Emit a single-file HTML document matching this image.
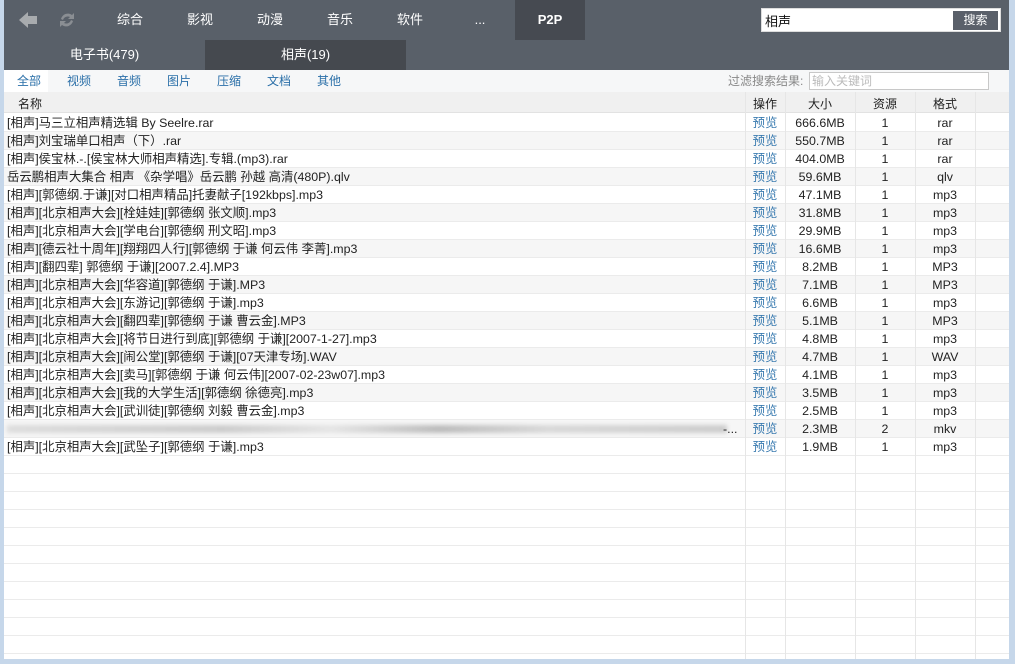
<!DOCTYPE html>
<html><head><meta charset="utf-8"><style>
*{margin:0;padding:0;box-sizing:border-box}
body{width:1015px;height:664px;background:#c6d7ea;position:relative;overflow:hidden;font-family:"Liberation Sans","Noto Sans CJK SC",sans-serif;font-size:12px;color:#222}
.win{position:absolute;left:4px;top:0;width:1005px;height:659px;background:#fff;overflow:hidden}
.top{position:absolute;left:0;top:0;width:1005px;height:70px;background:#596069}
.nav{position:absolute;top:0;height:40px;line-height:40px;color:#fff;font-size:13px;text-align:center}
.p2p{background:#464a51;font-weight:bold}
.sub{position:absolute;top:40px;height:30px;line-height:30px;color:#fff;font-size:13px;text-align:center;width:201px}
.search{position:absolute;left:757px;top:8px;width:240px;height:24px;background:#fff;border:1px solid #ddd}
.search span{position:absolute;left:3px;top:2px;font-size:13px;color:#111}
.search b{position:absolute;right:2px;top:2px;width:45px;height:19px;background:#5a606a;color:#fff;font-weight:normal;font-size:12px;text-align:center;line-height:19px}
.filter{position:absolute;left:0;top:70px;width:1005px;height:22px;background:#f6f7f8}
.filter a{position:absolute;top:0;line-height:22px;color:#2a6fa8;font-size:12px}
.hdr{position:absolute;left:0;top:92px;width:1005px;height:21px;background:#f0f0f0;border-bottom:1px solid #e2e2e2}
.row{position:absolute;left:0;width:1005px;height:18px;line-height:18px;border-bottom:1px solid #ebebeb;font-size:12.4px}
.row.s{background:#f6f6f6}
.c{position:absolute;top:0;text-align:center}
.vl{position:absolute;top:92px;bottom:0;width:1px;background:#e6e6e6}
</style></head><body>
<div class="win">
<div class="top">
<svg style="position:absolute;left:13px;top:10px" width="22" height="20"><path d="M2 10 L11 2 L11 6 L20 6 L20 14 L11 14 L11 18 Z" fill="#a8abae"/></svg>
<svg style="position:absolute;left:52px;top:10px" width="22" height="20"><path d="M5 9 A7 7 0 0 1 16 5 L18 3 L18 9 L12 9 L14 7 A5 5 0 0 0 7 10 Z M17 11 A7 7 0 0 1 6 15 L4 17 L4 11 L10 11 L8 13 A5 5 0 0 0 15 10 Z" fill="#8a8e93"/></svg>
<div class="nav" style="left:101px;width:50px">综合</div>
<div class="nav" style="left:171px;width:50px">影视</div>
<div class="nav" style="left:241px;width:50px">动漫</div>
<div class="nav" style="left:311px;width:50px">音乐</div>
<div class="nav" style="left:381px;width:50px">软件</div>
<div class="nav" style="left:451px;width:50px">...</div>
<div class="nav p2p" style="left:511px;width:70px">P2P</div>
<div class="sub" style="left:0">电子书(479)</div>
<div class="sub" style="left:201px;background:#45494f">相声(19)</div>
<div class="search"><span>相声</span><b>搜索</b></div>
</div>
<div class="filter">
<div style="position:absolute;left:0;top:0;width:44px;height:22px;background:#fff"></div>
<a style="left:13px">全部</a><a style="left:63px">视频</a><a style="left:113px">音频</a><a style="left:163px">图片</a><a style="left:213px">压缩</a><a style="left:263px">文档</a><a style="left:313px">其他</a>
<span style="position:absolute;left:724px;top:0;line-height:22px;color:#888">过滤搜索结果:</span>
<div style="position:absolute;left:805px;top:2px;width:180px;height:18px;border:1px solid #c8c8c8;background:#fff;color:#bbb;line-height:16px;padding-left:2px">输入关键词</div>
</div>
<div class="hdr">
<span style="position:absolute;left:14px;top:3px">名称</span>
<span class="c" style="left:741px;width:40px;top:3px">操作</span>
<span class="c" style="left:781px;width:70px;top:3px">大小</span>
<span class="c" style="left:851px;width:60px;top:3px">资源</span>
<span class="c" style="left:911px;width:60px;top:3px">格式</span>
</div>
<div id="rows"></div>
<div class="vl" style="left:741px"></div><div class="vl" style="left:781px"></div><div class="vl" style="left:851px"></div><div class="vl" style="left:911px"></div><div class="vl" style="left:971px"></div>
</div>
<script>
var d=[["[相声]马三立相声精选辑 By Seelre.rar","666.6MB",1,"rar"],["[相声]刘宝瑞单口相声（下）.rar","550.7MB",1,"rar"],["[相声]侯宝林.-.[侯宝林大师相声精选].专辑.(mp3).rar","404.0MB",1,"rar"],["岳云鹏相声大集合 相声 《杂学唱》岳云鹏 孙越 高清(480P).qlv","59.6MB",1,"qlv"],["[相声][郭德纲.于谦][对口相声精品]托妻献子[192kbps].mp3","47.1MB",1,"mp3"],["[相声][北京相声大会][栓娃娃][郭德纲 张文顺].mp3","31.8MB",1,"mp3"],["[相声][北京相声大会][学电台][郭德纲 刑文昭].mp3","29.9MB",1,"mp3"],["[相声][德云社十周年][翔翔四人行][郭德纲 于谦 何云伟 李菁].mp3","16.6MB",1,"mp3"],["[相声][翻四辈] 郭德纲 于谦][2007.2.4].MP3","8.2MB",1,"MP3"],["[相声][北京相声大会][华容道][郭德纲 于谦].MP3","7.1MB",1,"MP3"],["[相声][北京相声大会][东游记][郭德纲 于谦].mp3","6.6MB",1,"mp3"],["[相声][北京相声大会][翻四辈][郭德纲 于谦 曹云金].MP3","5.1MB",1,"MP3"],["[相声][北京相声大会][将节日进行到底][郭德纲 于谦][2007-1-27].mp3","4.8MB",1,"mp3"],["[相声][北京相声大会][闹公堂][郭德纲 于谦][07天津专场].WAV","4.7MB",1,"WAV"],["[相声][北京相声大会][卖马][郭德纲 于谦 何云伟][2007-02-23w07].mp3","4.1MB",1,"mp3"],["[相声][北京相声大会][我的大学生活][郭德纲 徐德亮].mp3","3.5MB",1,"mp3"],["[相声][北京相声大会][武训徒][郭德纲 刘毅 曹云金].mp3","2.5MB",1,"mp3"],["BLUR","2.3MB",2,"mkv"],["[相声][北京相声大会][武坠子][郭德纲 于谦].mp3","1.9MB",1,"mp3"]];
var h="";for(var i=0;i<30;i++){var y=114+i*18;var r=d[i];h+='<div class="row'+(r&&i%2?' s':'')+'" style="top:'+y+'px">';if(r){var n=r[0]=="BLUR"?'<span style="display:inline-block;width:720px;height:8px;margin-top:5px;background:linear-gradient(90deg,#ddd,#ccc 30%,#e5e5e5 45%,#bbb 60%,#d8d8d8 75%,#ccc);filter:blur(2px)"></span><span style="position:absolute;left:716px">-...</span>':r[0];h+='<span style="position:absolute;left:3px;white-space:nowrap">'+n+'</span><span class="c" style="left:741px;width:40px;color:#3a7bb0">预览</span><span class="c" style="left:781px;width:70px">'+r[1]+'</span><span class="c" style="left:851px;width:60px">'+r[2]+'</span><span class="c" style="left:911px;width:60px">'+r[3]+'</span>';}h+='</div>';}
document.getElementById('rows').innerHTML=h;
</script>
</body></html>
